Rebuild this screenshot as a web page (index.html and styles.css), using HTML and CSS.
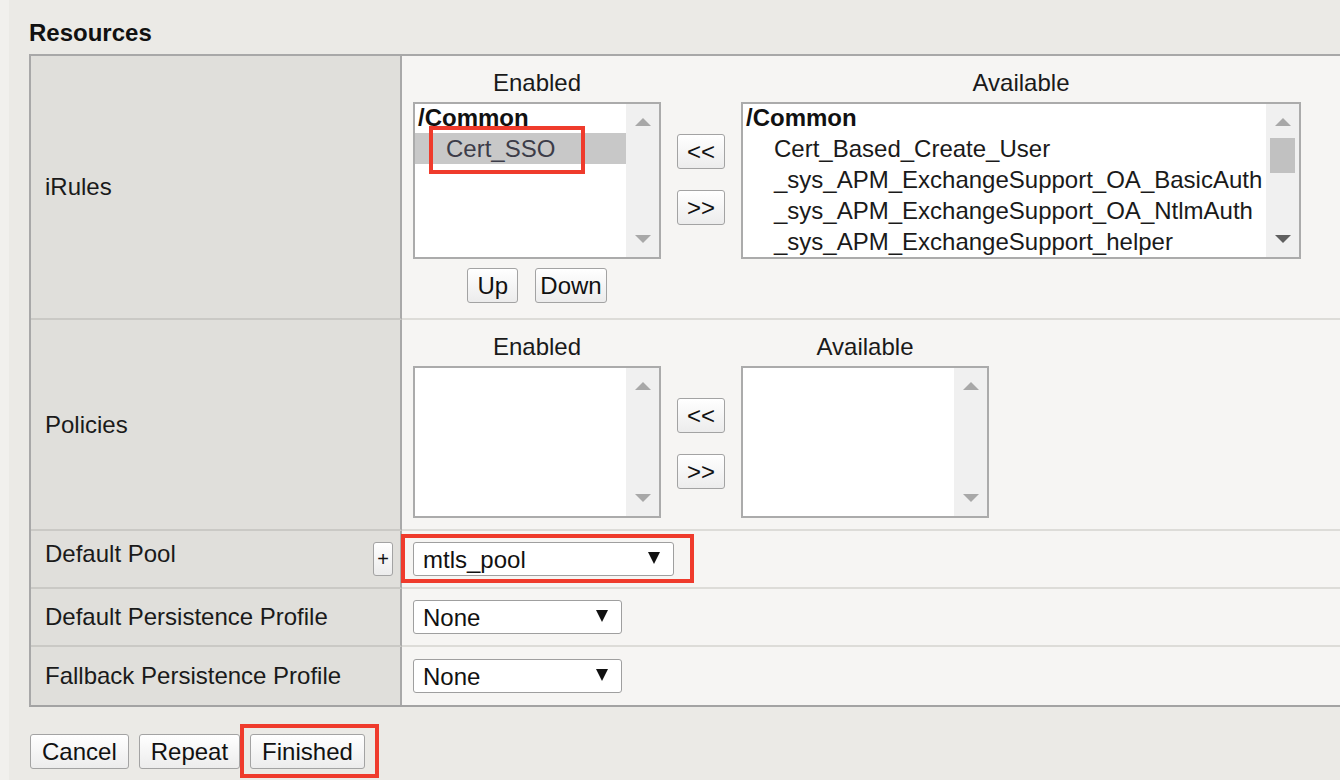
FILE: index.html
```html
<!DOCTYPE html>
<html lang="en">
<head>
    <meta charset="UTF-8">
    <meta name="viewport" content="width=device-width, initial-scale=1.0">
    <title>Virtual Server - Resources</title>
    <link rel="stylesheet" href="styles.css">
</head>
<body>
<div class="page">

    <h2 class="section-title">Resources</h2>

    <div class="props">
        <!-- iRules -->
        <div class="prop-label">iRules</div>
        <div class="prop-value top">
            <div class="picker">
                <div class="picker-head">Enabled</div>
                <div></div>
                <div class="picker-head">Available</div>

                <div class="listbox">
                    <div class="options">
                        <div class="opt-group">/Common</div>
                        <div class="opt selected">Cert_SSO<span class="callout"></span></div>
                    </div>
                    <div class="scrollbar">
                        <span class="arrow-up"></span>
                        <span class="arrow-down"></span>
                    </div>
                </div>
                <div class="move-btns">
                    <button class="btn">&lt;&lt;</button>
                    <button class="btn">&gt;&gt;</button>
                </div>
                <div class="listbox wide">
                    <div class="options">
                        <div class="opt-group">/Common</div>
                        <div class="opt">Cert_Based_Create_User</div>
                        <div class="opt">_sys_APM_ExchangeSupport_OA_BasicAuth</div>
                        <div class="opt">_sys_APM_ExchangeSupport_OA_NtlmAuth</div>
                        <div class="opt">_sys_APM_ExchangeSupport_helper</div>
                    </div>
                    <div class="scrollbar">
                        <span class="arrow-up"></span>
                        <span class="thumb"></span>
                        <span class="arrow-down active"></span>
                    </div>
                </div>

                <div class="order-btns">
                    <button class="btn btn-small">Up</button>
                    <button class="btn btn-small">Down</button>
                </div>
            </div>
        </div>

        <!-- Policies -->
        <div class="prop-label">Policies</div>
        <div class="prop-value top">
            <div class="picker">
                <div class="picker-head">Enabled</div>
                <div></div>
                <div class="picker-head">Available</div>

                <div class="listbox short">
                    <div class="options"></div>
                    <div class="scrollbar">
                        <span class="arrow-up"></span>
                        <span class="arrow-down"></span>
                    </div>
                </div>
                <div class="move-btns">
                    <button class="btn">&lt;&lt;</button>
                    <button class="btn">&gt;&gt;</button>
                </div>
                <div class="listbox short narrow">
                    <div class="options"></div>
                    <div class="scrollbar">
                        <span class="arrow-up"></span>
                        <span class="arrow-down"></span>
                    </div>
                </div>
            </div>
        </div>

        <!-- Default Pool -->
        <div class="prop-label">
            <span class="raised">Default Pool</span>
            <button class="btn btn-plus">+</button>
        </div>
        <div class="prop-value">
            <div class="select wide">
                <select>
                    <option>mtls_pool</option>
                </select>
                <span class="callout"></span>
            </div>
        </div>

        <!-- Persistence -->
        <div class="prop-label">Default Persistence Profile</div>
        <div class="prop-value">
            <div class="select">
                <select>
                    <option>None</option>
                </select>
            </div>
        </div>

        <div class="prop-label">Fallback Persistence Profile</div>
        <div class="prop-value">
            <div class="select">
                <select>
                    <option>None</option>
                </select>
            </div>
        </div>
    </div>

    <div class="actions">
        <button class="btn">Cancel</button>
        <button class="btn">Repeat</button>
        <span class="callout-wrap">
            <button class="btn">Finished</button>
            <span class="callout"></span>
        </span>
    </div>

</div>
</body>
</html>
```

FILE: styles.css
```css
* {
    box-sizing: border-box;
}

html, body {
    height: 100%;
}

body {
    margin: 0;
    background: linear-gradient(to right, #f1f0ed 9px, #ebeae6 9px);
    font-family: "Liberation Sans", Arial, sans-serif;
    font-size: 24px;
    color: #1a1a1a;
    overflow: hidden;
}

.page {
    min-height: 100%;
    padding: 19px 0 16px 29px;
}

.section-title {
    margin: 0 0 7px;
    font-size: 24px;
    line-height: 28px;
    font-weight: bold;
    color: #111;
}

/* property table */
.props {
    display: grid;
    grid-template-columns: 371px 1fr;
    grid-template-rows: 264px 211px 58px 58px 58px;
    border-top: 2px solid #a8a8a8;
    border-left: 2px solid #a8a8a8;
    border-bottom: 2px solid #a3a3a3;
}

.prop-label {
    display: flex;
    align-items: center;
    justify-content: space-between;
    padding: 0 7px 0 14px;
    background: #e0dfdb;
    border-right: 2px solid #a9a9a9;
    border-bottom: 2px solid #cac9c5;
}

.prop-label .raised {
    margin-bottom: 10px;
}

.prop-value {
    display: flex;
    align-items: center;
    padding-left: 11px;
    background: #f6f5f3;
    border-bottom: 2px solid #dddcd8;
}

.prop-value.top {
    align-items: flex-start;
    padding-top: 13px;
}

.props > :nth-last-child(-n+2) {
    border-bottom: none;
}

/* buttons */
.btn {
    height: 35px;
    padding: 0 11px;
    font: inherit;
    line-height: 1;
    color: #111;
    background: linear-gradient(#ffffff, #ececec);
    border: 1px solid #a3a3a3;
    border-radius: 3px;
}

.btn-small {
    min-width: 51px;
    padding: 0 4px;
}

.btn-plus {
    width: 20px;
    height: 34px;
    padding: 0;
    font-size: 20px;
}

/* enabled / available picker */
.picker {
    display: grid;
    grid-template-columns: 248px 48px auto;
    column-gap: 16px;
}

.picker-head {
    text-align: center;
    line-height: 28px;
    margin-bottom: 5px;
}

.move-btns {
    display: flex;
    flex-direction: column;
    gap: 21px;
    padding-top: 32px;
}

.move-btns .btn {
    width: 48px;
    padding: 0;
}

.order-btns {
    grid-column: 1;
    display: flex;
    justify-content: center;
    gap: 17px;
    margin-top: 9px;
}

.listbox {
    position: relative;
    display: flex;
    height: 157px;
    background: #fff;
    border: 2px solid #ababab;
}

.listbox.short {
    height: 152px;
}

.listbox.wide {
    width: 560px;
}

.listbox.narrow {
    width: 248px;
}

.options {
    flex: 1;
    margin-top: -2px;
}

.opt-group {
    padding-left: 3px;
    font-weight: bold;
    line-height: 31px;
    color: #111;
}

.opt {
    position: relative;
    padding-left: 31px;
    line-height: 31px;
    white-space: nowrap;
}

.opt.selected {
    background: #c8c8c8;
    color: #3c3c48;
}

.scrollbar {
    width: 33px;
    display: flex;
    flex-direction: column;
    align-items: center;
    padding: 14px 0;
    background: #f0f0f0;
}

.arrow-up {
    width: 0;
    height: 0;
    border-left: 8px solid transparent;
    border-right: 8px solid transparent;
    border-bottom: 8px solid #a8a8a8;
}

.arrow-down {
    width: 0;
    height: 0;
    margin-top: auto;
    border-left: 8px solid transparent;
    border-right: 8px solid transparent;
    border-top: 8px solid #a8a8a8;
}

.arrow-down.active {
    border-top-color: #5f5f5f;
}

.thumb {
    width: 25px;
    height: 35px;
    margin-top: 12px;
    background: #c1c1c1;
}

/* dropdowns */
.select {
    position: relative;
    display: inline-block;
}

.select select {
    -webkit-appearance: none;
    appearance: none;
    display: block;
    width: 209px;
    height: 34px;
    padding: 0 0 0 9px;
    font: inherit;
    color: #111;
    background: #fff;
    border: 1px solid #9f9f9f;
    border-radius: 3px;
}

.select.wide select {
    width: 261px;
}

.select::after {
    content: "";
    position: absolute;
    right: 14px;
    top: 10px;
    border-left: 6px solid transparent;
    border-right: 6px solid transparent;
    border-top: 12px solid #111;
    pointer-events: none;
}

/* red highlight frames */
.callout {
    position: absolute;
    border: 4px solid #ef3b2c;
    pointer-events: none;
}

.opt.selected .callout {
    left: 14px;
    top: -7px;
    width: 156px;
    height: 48px;
}

.select .callout {
    top: -8px;
    right: -20px;
    bottom: -7px;
    left: -12px;
}

.callout-wrap {
    position: relative;
    display: inline-block;
}

.callout-wrap .callout {
    top: -10px;
    right: -14px;
    bottom: -9px;
    left: -10px;
}

/* bottom buttons */
.actions {
    display: flex;
    gap: 10px;
    margin-top: 27px;
    padding-left: 1px;
}
```
